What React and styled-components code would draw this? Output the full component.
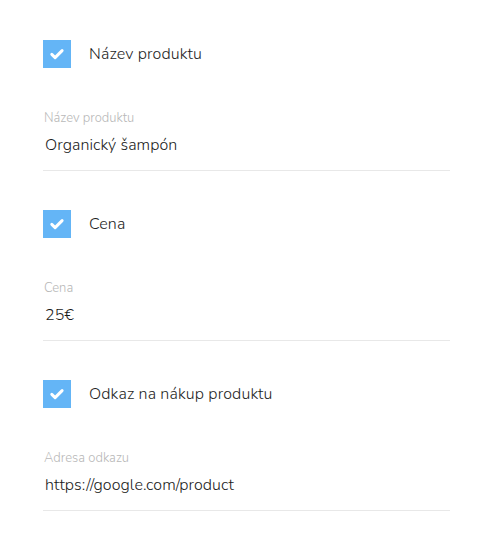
import React from 'react';
import styled, { createGlobalStyle } from 'styled-components';

const GlobalStyle = createGlobalStyle`
  body {
    margin: 0;
    background: #fff;
    font-family: Nunito, Lato, "Open Sans", sans-serif;
  }
`;

const Form = styled.div`
  width: 407px;
  padding: 40px 0 0 43px;
`;

const Section = styled.div`
  margin-bottom: 39px;
`;

const CheckRow = styled.label`
  display: flex;
  align-items: center;
  gap: 18px;
  height: 28px;
  font-size: 16px;
  font-weight: 300;
  letter-spacing: 0.14px;
  color: #1e1e1e;
  cursor: pointer;
`;

const Box = styled.span`
  width: 28px;
  height: 28px;
  background: ${p => (p.checked ? '#64b5f6' : '#fff')};
  display: flex;
  align-items: center;
  justify-content: center;
  flex-shrink: 0;
`;

const Field = styled.div`
  margin-top: 42px;
  padding-bottom: 14px;
  border-bottom: 1px solid #e8e8e8;
`;

const FieldLabel = styled.div`
  padding-left: 1px;
  font-size: 13px;
  line-height: 16px;
  font-weight: 300;
  color: #b8b8b8;
`;

const FieldValue = styled.div`
  margin-top: 8px;
  padding-left: 2px;
  font-size: 16px;
  line-height: 22px;
  font-weight: 300;
  color: #1a1a1a;
  letter-spacing: 0.08px;
`;

const Check = () => (
  <svg width="16" height="16" viewBox="0 0 16 16">
    <path d="M2.8 8.4l3.3 3.2 7-7" fill="none" stroke="#fff" strokeWidth="3" strokeLinecap="round" strokeLinejoin="round" />
  </svg>
);

const items = [
  { title: 'Název produktu', label: 'Název produktu', value: 'Organický šampón' },
  { title: 'Cena', label: 'Cena', value: '25€' },
  { title: 'Odkaz na nákup produktu', label: 'Adresa odkazu', value: 'https://google.com/product' },
];

export default function App() {
  return (
    <>
      <GlobalStyle />
      <Form>
        {items.map(it => (
          <Section key={it.title}>
            <CheckRow>
              <Box checked><Check /></Box>
              {it.title}
            </CheckRow>
            <Field>
              <FieldLabel>{it.label}</FieldLabel>
              <FieldValue>{it.value}</FieldValue>
            </Field>
          </Section>
        ))}
      </Form>
    </>
  );
}
